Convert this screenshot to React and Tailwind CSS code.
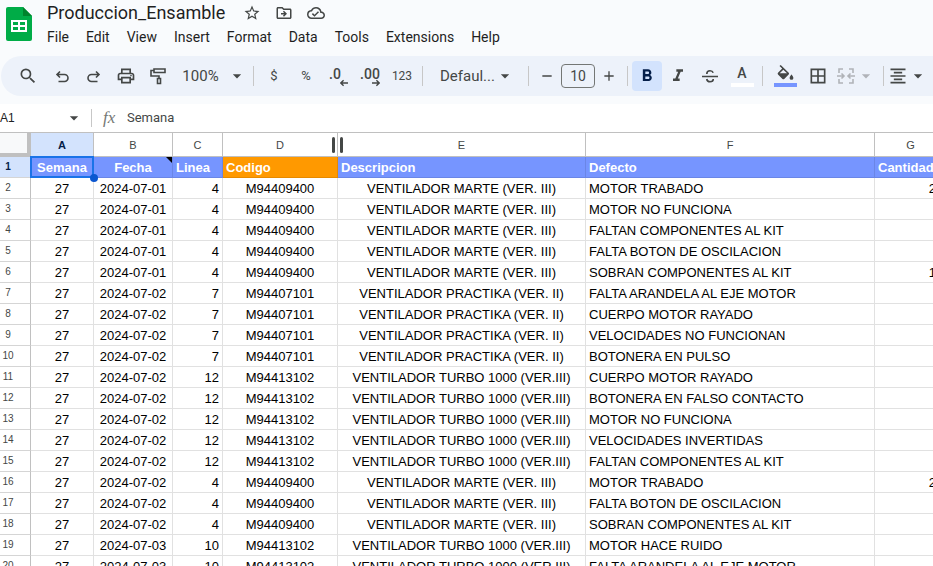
import React from "react";
import { MdSearch, MdStarBorder, MdOutlinePrint, MdFormatItalic, MdFormatBold, MdArrowDropDown, MdBorderAll, MdFormatAlignCenter, MdAdd, MdRemove, MdOutlineDriveFileMove, MdOutlineCloudDone } from "react-icons/md";

const MARTE = ["M94409400", "VENTILADOR MARTE (VER. III)"];
const PRACTIKA = ["M94407101", "VENTILADOR PRACTIKA (VER. II)"];
const TURBO = ["M94413102", "VENTILADOR TURBO 1000 (VER.III)"];

const rows = [
  ["2024-07-01", 4, MARTE, "MOTOR TRABADO", "2"],
  ["2024-07-01", 4, MARTE, "MOTOR NO FUNCIONA"],
  ["2024-07-01", 4, MARTE, "FALTAN COMPONENTES AL KIT"],
  ["2024-07-01", 4, MARTE, "FALTA BOTON DE OSCILACION"],
  ["2024-07-01", 4, MARTE, "SOBRAN COMPONENTES AL KIT", "1"],
  ["2024-07-02", 7, PRACTIKA, "FALTA ARANDELA AL EJE MOTOR"],
  ["2024-07-02", 7, PRACTIKA, "CUERPO MOTOR RAYADO"],
  ["2024-07-02", 7, PRACTIKA, "VELOCIDADES NO FUNCIONAN"],
  ["2024-07-02", 7, PRACTIKA, "BOTONERA EN PULSO"],
  ["2024-07-02", 12, TURBO, "CUERPO MOTOR RAYADO"],
  ["2024-07-02", 12, TURBO, "BOTONERA EN FALSO CONTACTO"],
  ["2024-07-02", 12, TURBO, "MOTOR NO FUNCIONA"],
  ["2024-07-02", 12, TURBO, "VELOCIDADES INVERTIDAS"],
  ["2024-07-02", 12, TURBO, "FALTAN COMPONENTES AL KIT"],
  ["2024-07-02", 4, MARTE, "MOTOR TRABADO", "2"],
  ["2024-07-02", 4, MARTE, "FALTA BOTON DE OSCILACION"],
  ["2024-07-02", 4, MARTE, "SOBRAN COMPONENTES AL KIT"],
  ["2024-07-03", 10, TURBO, "MOTOR HACE RUIDO"],
  ["2024-07-03", 10, TURBO, "FALTA ARANDELA AL EJE MOTOR"],
];

const Icon = ({ children, className = "size-5" }) => (
  <svg viewBox="0 0 20 20" className={className} fill="none" stroke="currentColor" strokeWidth="1.6" aria-hidden="true">{children}</svg>
);

const Tool = ({ label, className = "w-8", children, ...rest }) => (
  <button type="button" aria-label={label} className={"flex h-[30px] shrink-0 items-center justify-center rounded " + className} {...rest}>
    {children}
  </button>
);

const Separator = () => <span className="mx-1 h-5 w-px shrink-0 bg-[#c7c7c7]" />;

function SheetsLogo() {
  return (
    <svg viewBox="0 0 26 34" className="h-[34px] w-[26px]" aria-label="Sheets" role="img">
      <path d="M2 0h15l9 9v23a2 2 0 0 1-2 2H2a2 2 0 0 1-2-2V2a2 2 0 0 1 2-2z" fill="#00ac47" />
      <path d="M17 0l9 9h-9z" fill="#00832d" />
      <path d="M5 13h16v12H5zM7 15v3h5v-3zM14 15v3h5v-3zM7 20v3h5v-3zM14 20v3h5v-3z" fill="#fff" fillRule="evenodd" />
    </svg>
  );
}

function Header() {
  return (
    <header className="flex h-14 shrink-0 pl-1.5 text-[#1f1f1f]">
      <a href="#home" aria-label="Sheets home" className="mt-[7px] block h-[34px] shrink-0"><SheetsLogo /></a>
      <div className="pl-[15px]">
        <div className="flex h-[26px] items-center">
          <h1 className="mr-[18px] text-[18px] leading-6">Produccion_Ensamble</h1>
          <div className="flex gap-3.5 text-[#444746]">
            <button type="button" aria-label="Star"><MdStarBorder className="size-[18px]" /></button>
            <button type="button" aria-label="Move"><MdOutlineDriveFileMove className="size-[18px]" /></button>
            <button type="button" aria-label="Saved to Drive"><MdOutlineCloudDone className="size-[18px]" /></button>
          </div>
        </div>
        <nav className="flex h-[22px] items-center gap-[17px] text-[14px] leading-5">
          {["File", "Edit", "View", "Insert", "Format", "Data", "Tools", "Extensions", "Help"].map((m) => (
            <button type="button" key={m}>{m}</button>
          ))}
        </nav>
      </div>
    </header>
  );
}

function Toolbar() {
  return (
    <div role="toolbar" aria-label="Formatting" className="ml-px flex h-10 shrink-0 items-center overflow-hidden rounded-l-full bg-[#edf2fa] pl-[11px] text-[#444746]">
      <Tool label="Search"><MdSearch className="size-5" /></Tool>
      <Tool label="Undo" className="ml-0.5 w-8">
        <Icon><path d="M5 8.5h7.5a3.5 3.5 0 0 1 0 7H6.5M8 5.5l-3 3 3 3" /></Icon>
      </Tool>
      <Tool label="Redo">
        <Icon><path d="M15 8.5H7.5a3.5 3.5 0 0 0 0 7h6M12 5.5l3 3-3 3" /></Icon>
      </Tool>
      <Tool label="Print"><MdOutlinePrint className="size-5" /></Tool>
      <Tool label="Paint format">
        <Icon><path d="M6 3h11v3.5H6zM6 4.5H3V10h8v3M9.500 12.500h3v5h-3z" /></Icon>
      </Tool>
      <Tool label="Zoom" className="w-[75px] gap-2 pl-1.5 text-[15px]">100%<MdArrowDropDown className="size-5" /></Tool>
      <Separator />
      <Tool label="Currency" className="w-8 text-[13px]">$</Tool>
      <Tool label="Percent" className="w-8 text-[13px]">%</Tool>
      <Tool label="Decrease decimals" className="relative w-8 pr-1.5 pb-1 text-[14px] font-medium">.0
        <Icon className="absolute right-1.5 bottom-1 size-2"><path d="M20 10H3M9 3l-7 7 7 7" strokeWidth="3.5" /></Icon>
      </Tool>
      <Tool label="Increase decimals" className="relative w-8 pb-1 text-[14px] font-medium">.00
        <Icon className="absolute right-1.5 bottom-1 size-2"><path d="M0 10h17M11 3l7 7-7 7" strokeWidth="3.5" /></Icon>
      </Tool>
      <Tool label="More formats" className="w-8 text-[12px]">123</Tool>
      <Separator />
      <Tool label="Font" className="w-[97px] justify-between pr-1.5 pl-2.5 text-[15px]">Defaul...<MdArrowDropDown className="size-5" /></Tool>
      <Separator />
      <Tool label="Decrease font size" className="w-7"><MdRemove className="size-4" /></Tool>
      <input aria-label="Font size" defaultValue="10" className="h-6 w-[34px] shrink-0 rounded border border-[#747775] bg-transparent text-center text-[14px]" />
      <Tool label="Increase font size" className="w-7"><MdAdd className="size-4" /></Tool>
      <Separator />
      <Tool label="Bold" aria-pressed="true" className="w-[30px] bg-[#d3e3fd] text-[#041e49]"><MdFormatBold className="size-5" /></Tool>
      <Tool label="Italic"><MdFormatItalic className="size-5" /></Tool>
      <Tool label="Strikethrough">
        <Icon><path d="M2 10.500h16M6.800 8C6.800 5.800 8 4.800 10 4.800c1.600 0 2.700.700 3.200 2M6.700 13c.3 1.800 1.500 2.700 3.300 2.700 2 0 3.300-.900 3.300-2.700" /></Icon>
      </Tool>
      <Tool label="Text color" className="w-8 flex-col text-[14px] leading-[17px] font-medium">A<span className="mt-px h-1 w-[23px] bg-white" /></Tool>
      <Separator />
      <Tool label="Fill color" className="w-9 flex-col">
        <svg viewBox="0 0 18 18" className="size-[18px]" fill="currentColor" aria-hidden="true">
          <path fillRule="evenodd" d="M3.500 1 4.700 0l8 7.800c.5.500.5 1.100 0 1.600l-4.500 4.500c-.5.500-1.200.5-1.700 0L2 9.400c-.5-.5-.5-1.100 0-1.600l4.200-4.200zM7.300 4.700 3.700 8.300h7.300zM15.500 9.500s-1.900 2.100-1.900 3.400a1.900 1.900 0 0 0 3.800 0c0-1.300-1.900-3.400-1.900-3.400z" />
        </svg>
        <span className="h-1 w-[23px] bg-[#7695ff]" />
      </Tool>
      <Tool label="Borders" className="w-[30px]"><MdBorderAll className="size-5" /></Tool>
      <Tool label="Merge cells" disabled className="w-[46px] text-[#b0b3b8]">
        <Icon><path d="M7 3H3v4M3 13v4h4M13 3h4v4M17 13v4h-4M1 10h7M5.500 7.500 8 10l-2.500 2.500M19 10h-7M14.500 7.500 12 10l2.500 2.500" /></Icon>
        <MdArrowDropDown className="size-5" />
      </Tool>
      <Separator />
      <Tool label="Horizontal align" className="w-10"><MdFormatAlignCenter className="size-5" /><MdArrowDropDown className="size-5" /></Tool>
    </div>
  );
}

function FormulaBar() {
  return (
    <div className="mt-2 flex h-7 shrink-0 items-center bg-white text-[#444746]">
      <input aria-label="Name box" defaultValue="A1" className="w-16 min-w-0 bg-transparent font-['Liberation_Sans',Arial,sans-serif] text-[12px] text-[#202124]" />
      <button type="button" aria-label="Named ranges"><MdArrowDropDown className="size-5" /></button>
      <span className="mx-[7px] h-[18px] w-px bg-[#c7c7c7]" />
      <span className="w-7 pl-1 font-['Liberation_Serif',serif] text-[17px] text-[#747775] italic">fx</span>
      <input aria-label="Formula" defaultValue="Semana" className="grow bg-transparent text-[13px]" />
    </div>
  );
}

const CELL = "h-[21px] border-r border-b border-[#e1e1e1] p-0 align-bottom leading-[18px]";
const LETTER = "relative h-6 border-r border-b border-[#c0c0c0] p-0 text-[11px] font-normal text-[#444746]";
const TITLE_TEXT = "h-[21px] border-r border-b px-[3px] py-0 text-left align-bottom leading-[18px] font-bold text-white";
const TITLE = TITLE_TEXT + " relative border-[#6a86e6] bg-[#7695ff]";
const ROWNUM = "h-[21px] border-r border-b border-r-[#c0c0c0] border-b-[#d5d5d5] p-0 pr-3.5 text-center text-[10px] leading-5 font-normal text-[#444746]";

function Grid() {
  return (
    <div className="grow overflow-hidden border-t border-[#c0c0c0] bg-white font-['Liberation_Sans',Arial,sans-serif] text-black">
      <table className="w-[947px] table-fixed border-separate border-spacing-0 text-[13px] leading-5 whitespace-nowrap">
        <colgroup>
          <col className="w-[31px]" /><col className="w-[63px]" /><col className="w-[79px]" /><col className="w-[50px]" />
          <col className="w-[115px]" /><col className="w-[248px]" /><col className="w-[289px]" /><col className="w-[72px]" />
        </colgroup>
        <thead>
          <tr>
            <td className="h-6 border-r-4 border-b-4 border-[#c0c0c0] bg-[#f8f9fa] p-0" />
            <th scope="col" className={LETTER + " bg-[#d3e3fd]"}><b className="text-[#041e49]">A</b></th>
            <th scope="col" className={LETTER}>B</th>
            <th scope="col" className={LETTER}>C</th>
            <th scope="col" className={LETTER}>D<span className="absolute top-1 right-0.5 h-4 w-[3px] rounded-sm bg-[#444746]" /></th>
            <th scope="col" className={LETTER}>E<span className="absolute top-1 left-0.5 h-4 w-[3px] rounded-sm bg-[#444746]" /></th>
            <th scope="col" className={LETTER}>F</th>
            <th scope="col" className={LETTER}>G</th>
          </tr>
        </thead>
        <tbody>
          <tr>
            <th scope="row" className={ROWNUM + " bg-[#d3e3fd]"}><b className="text-[#041e49]">1</b></th>
            <td className={TITLE}>
              <span className="block text-center">Semana</span>
              <span className="absolute -inset-px z-10 border-2 border-[#1a73e8]" />
              <span className="absolute -right-[5px] -bottom-[5px] z-20 size-2 rounded-full bg-[#0b57d0]" />
            </td>
            <td className={TITLE}>
              <span className="block text-center">Fecha</span>
              <span className="absolute top-0 right-0 border-t-[6px] border-l-[6px] border-t-black border-l-transparent" />
            </td>
            <td className={TITLE}>Linea</td>
            <td className={TITLE_TEXT + " border-[#e68a00] bg-[#ff9900]"}>Codigo</td>
            <td className={TITLE}>Descripcion</td>
            <td className={TITLE}>Defecto</td>
            <td className={TITLE}>Cantidad</td>
          </tr>
          {rows.map(([date, line, [code, product], defect, count], i) => (
            <tr key={i}>
              <th scope="row" className={ROWNUM}>{i + 2}</th>
              <td className={CELL + " text-center"}>27</td>
              <td className={CELL + " text-center"}>{date}</td>
              <td className={CELL + " pr-[3px] text-right"}>{line}</td>
              <td className={CELL + " text-center"}>{code}</td>
              <td className={CELL + " text-center"}>{product}</td>
              <td className={CELL + " pl-[3px]"}>{defect}</td>
              <td className={CELL + " pr-2.5 text-right"}>{count}</td>
            </tr>
          ))}
        </tbody>
      </table>
    </div>
  );
}

export default function App() {
  return (
    <div className="flex h-screen flex-col overflow-hidden bg-[#f9fbfd] font-[Roboto,sans-serif]">
      <Header />
      <Toolbar />
      <FormulaBar />
      <Grid />
    </div>
  );
}
